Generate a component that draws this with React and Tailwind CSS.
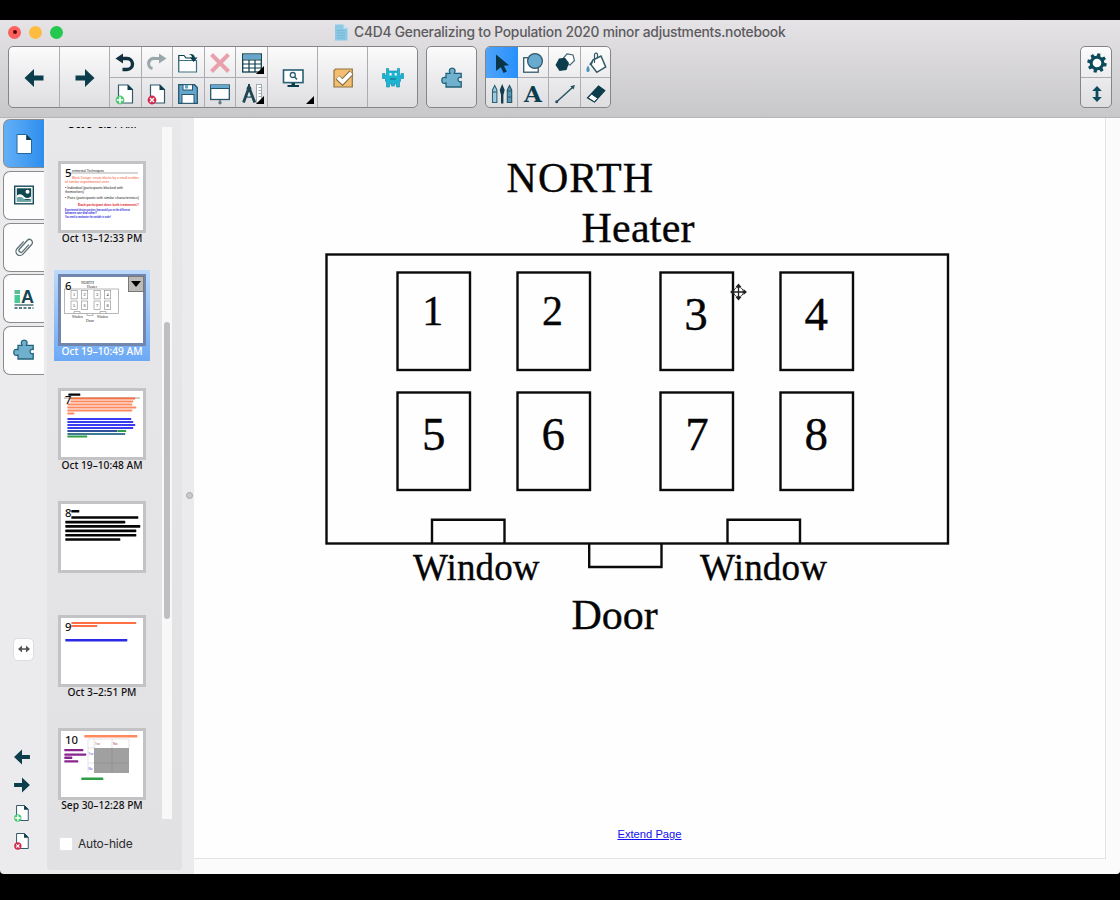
import React from "react";

const DARK = "#0b3d4c";
const BLUE = "#66a6cc";

function Svg({ size = 24, children, className = "" }) {
  return (
    <svg width={size} height={size} viewBox="0 0 24 24" fill="none" className={"shrink-0 " + className}>
      {children}
    </svg>
  );
}

const Arrow = ({ flip, size = 24 }) => (
  <Svg size={size} className={flip ? "rotate-180" : ""}>
    <path d="M2.5 12 L12 3 V9.6 H21.5 V14.4 H12 V21 Z" fill="#0b3d4c" />
  </Svg>
);
const Undo = () => (
  <Svg>
    <path d="M7 7.5 H14 A5 5 0 0 1 14 18.5 H9.5" stroke="#12303f" strokeWidth="3.4" />
    <path d="M2.5 7.5 L10 2.5 V12.5 Z" fill="#12303f" />
  </Svg>
);
const Redo = () => (
  <Svg>
    <path d="M17 7.5 H10 A5 5 0 0 0 7.5 17.5" stroke="#9aa8ac" strokeWidth="3.2" />
    <path d="M21.5 7.5 L14 2.5 V12.5 Z" fill="#9aa8ac" />
  </Svg>
);
const FolderOpen = () => (
  <Svg>
    <path d="M2.8 21 V4.5 H8 L10 7 H17" stroke={DARK} strokeWidth="1.2" fill="#fff" />
    <path d="M2.8 9.5 H20.5 V21 H2.8 Z" stroke="#3f7084" strokeWidth="1.2" fill="#fff" />
    <path d="M13 3 C17 2.5 18.5 4 18.8 6.5 H21.5 L17.6 11 L14 6.5 H16.2 C16 5 15 4 13 3Z" fill={DARK} />
  </Svg>
);
const Cross = () => (
  <Svg>
    <path d="M3.5 3.5 L20.5 20.5 M20.5 3.5 L3.5 20.5" stroke="#e8a0ac" strokeWidth="4" />
  </Svg>
);
const Table = () => (
  <Svg>
    <rect x="2.7" y="3" width="18.6" height="18" fill="#fff" stroke={DARK} strokeWidth="1.3" />
    <rect x="3.2" y="3.5" width="17.6" height="5" fill={BLUE} />
    <path d="M2.7 9 H21.3 M2.7 13 H21.3 M2.7 17 H21.3 M9 9 V21 M15 9 V21" stroke={DARK} strokeWidth="1.2" />
  </Svg>
);
const PageIcon = ({ kind, size = 24 }) => (
  <Svg size={size}>
    <path d="M5.5 3 H15 L19.5 7.5 V21 H5.5 Z" fill="#fff" stroke="#34596a" strokeWidth="1.2" />
    <path d="M14.5 2.5 L20 8 H14.5 Z" fill={DARK} />
    {kind === "add" && (
      <>
        <circle cx="7" cy="18" r="4.4" fill="#4cc873" />
        <path d="M7 14.8 V21.2 M3.8 18 H10.2" stroke="#fff" strokeWidth="1.6" />
      </>
    )}
    {kind === "del" && (
      <>
        <circle cx="7" cy="18" r="4.4" fill="#d22a4d" />
        <path d="M5 16 L9 20 M9 16 L5 20" stroke="#fff" strokeWidth="1.4" />
      </>
    )}
  </Svg>
);
const Save = () => (
  <Svg>
    <path d="M2.7 2.7 H18.5 L21.3 5.5 V21.3 H2.7 Z" fill={BLUE} stroke="#23566c" strokeWidth="1.3" />
    <rect x="7" y="2.7" width="9.5" height="5.3" fill="#fff" stroke="#23566c" />
    <rect x="9" y="3" width="3" height="3.5" fill={BLUE} />
    <rect x="6" y="12.5" width="12" height="8.8" fill="#fff" stroke="#23566c" />
  </Svg>
);
const Screen = () => (
  <Svg>
    <rect x="2.7" y="3" width="18.6" height="14.5" fill="#fff" stroke="#23566c" strokeWidth="1.3" />
    <rect x="3" y="3" width="18" height="3.3" fill={BLUE} />
    <path d="M2.7 6.5 H21.3" stroke="#23566c" />
    <path d="M12 18 V20" stroke="#647b86" strokeWidth="1.5" />
    <circle cx="12" cy="20.7" r="1.7" fill="#647b86" />
  </Svg>
);
const Compass = () => (
  <Svg>
    <path d="M9 5.5 L3.5 20.5 M9 5.5 L14.8 20.5" stroke="#1f4553" strokeWidth="2.8" />
    <path d="M5 13.5 Q9 17 13 13.5" stroke="#1f4553" strokeWidth="1.2" />
    <path d="M9 2 V5" stroke="#1f4553" strokeWidth="2" />
    <circle cx="9" cy="6.4" r="2.4" fill="#1f4553" />
    <rect x="16.5" y="2.5" width="5" height="18.5" fill="#fff" stroke="#a3adb1" />
    <path d="M18.5 5.5 H21.5 M18.5 8.5 H21.5 M18.5 11.5 H21.5 M18.5 14.5 H21.5" stroke="#a3adb1" />
  </Svg>
);
const Monitor = () => (
  <Svg>
    <rect x="2.5" y="4" width="19.5" height="12.6" fill="#fff" stroke="#2a6075" strokeWidth="1.6" />
    <circle cx="11.8" cy="9" r="2.5" stroke="#2a6075" strokeWidth="1.3" />
    <path d="M13.5 10.8 L16 13.5" stroke="#2a6075" strokeWidth="1.6" />
    <path d="M10.5 17 H14 V19 H18 V21 H6.5 V19 H10.5 Z" fill={DARK} />
  </Svg>
);
const CheckBox = () => (
  <Svg>
    <path d="M4.5 3 H21.3 V21 H3 V4.5 Z" fill="#f3be70" stroke="#8f7440" strokeWidth="1.2" />
    <path d="M6.5 11.5 L11.5 16 L20.5 6.5" stroke="#77643c" strokeWidth="5.6" />
    <path d="M6.8 11.5 L11.5 15.8 L20.3 6.8" stroke="#fff" strokeWidth="3.8" />
  </Svg>
);
const Monster = () => (
  <Svg>
    <path
      d="M5.5 2.5 H7.5 V5 H16.5 V2.5 H18.5 V9.5 H20 V7.5 H22.5 V12.5 H19.5 V15.5 H18.5 V21 H15.5 V18 H13.5 V20 H10.5 V18 H8.5 V21 H5.5 V15.5 H4.5 V12.5 H1.5 V7.5 H4 V9.5 H5.5 Z"
      fill="#1cb4d0"
      stroke="#1794b0"
      strokeWidth=".7"
    />
    <path d="M8.5 8.2 H10.5 M13.7 8.2 H15.7" stroke="#fff" strokeWidth="2.4" />
    <path d="M9 13 H15" stroke="#12667c" strokeWidth="1.2" />
  </Svg>
);
const Puzzle = ({ size = 24 }) => (
  <Svg size={size}>
    <path
      d="M6 7.3 H10 C8.2 3.8 10.2 2.2 12.2 2.2 C14.2 2.2 16.2 3.8 14.4 7.3 H21.2 V11.5 C17 10 17 17 21.2 15.6 V21 H6 V17 C2.5 18.5 1.8 16 1.8 14.3 C1.8 12.4 3 10.5 6 11.7 Z"
      fill="#6fb0ce"
      stroke="#23627a"
      strokeWidth="1.3"
    />
  </Svg>
);
const Pointer = () => (
  <Svg>
    <path d="M6 2.5 L19 13.2 L13.9 13.8 L16.8 19.6 L13.6 21 L10.8 15.3 L6 19 Z" fill="#0a3447" />
  </Svg>
);
const Shapes = () => (
  <Svg>
    <rect x="2.7" y="6.7" width="14.5" height="14.5" fill="#fff" stroke="#33596a" strokeWidth="1.3" />
    <circle cx="14" cy="10" r="7.4" fill="#68abcf" stroke="#33596a" strokeWidth="1.3" />
  </Svg>
);
const Polygons = () => (
  <Svg>
    <path d="M14 2.8 L20 4 L21.5 9.5 L17 14 L11.5 12.5 L10.5 7 Z" fill="#fff" stroke="#4b6b79" strokeWidth="1.2" />
    <path d="M6 7.5 L12 6.8 L16 12 L13.5 19 L6.5 20 L2.5 14 Z" fill={DARK} />
  </Svg>
);
const Bucket = () => (
  <Svg>
    <path d="M9 9 L17 5 L21.7 16 L12.8 21.3 L6.8 13.5 Z" fill="#fff" stroke="#33596a" strokeWidth="1.5" />
    <path d="M10.5 12 V3.3 C11 1.5 13.5 2 13.5 3.5 V7" stroke="#33596a" strokeWidth="1.2" />
    <path d="M9 8.5 L5 13.5 L8 14 Z" fill="#33596a" />
    <path d="M4 14.5 C6 17.5 6.3 21 4 21 C1.7 21 2 17.5 4 14.5" fill="#4d91b7" />
  </Svg>
);
const Pens = () => (
  <Svg>
    <path d="M2.5 20.5 V8 L4.7 3.5 L6.9 8 V20.5 Z" fill="#9ccbdc" stroke="#2d6379" strokeWidth="1.1" />
    <path d="M12.2 2 L14.7 8 L13.4 13 V21.5 H11 V13 L9.7 8 Z" fill="#123e4f" />
    <path d="M17.3 20.5 V8 L19.5 3.5 L21.7 8 V20.5 Z" fill="#5496b1" stroke="#24566a" strokeWidth="1.1" />
    <path d="M2.5 10 H6.9 M17.3 9 H21.7 M17.3 15 H21.7" stroke="#24566a" />
  </Svg>
);
const LetterA = () => <span className="font-['DejaVu_Serif',serif] text-[23px] leading-[24px] font-bold text-[#0b3d4c]">A</span>;
const Line = () => (
  <Svg>
    <path d="M4 19.5 L20 5" stroke="#24505f" strokeWidth="1.4" />
    <circle cx="3.7" cy="19.7" r="1.5" fill="#24505f" />
    <path d="M22 3 L20.5 7.5 L17.3 4.2 Z" fill="#24505f" />
  </Svg>
);
const Eraser = () => (
  <Svg>
    <path d="M14.5 4 L20.8 8.5 L10.5 20 L3.5 15.8 Z" fill={DARK} stroke={DARK} strokeWidth="1.2" />
    <path d="M7.6 12 L13.8 16.4 L10.3 19.8 L4 15.8 Z" fill="#fff" stroke={DARK} />
  </Svg>
);
const Gear = () => (
  <Svg>
    <g fill="#0b4b5c">
      {[0, 45, 90, 135, 180, 225, 270, 315].map((a) => (
        <path key={a} d="M10 6 L10.5 2.3 H13.5 L14 6 Z" transform={`rotate(${a + 12} 12 12)`} />
      ))}
    </g>
    <circle cx="12" cy="12" r="5.8" fill="#fff" stroke="#0b4b5c" strokeWidth="3" />
  </Svg>
);
const UpDown = () => (
  <Svg>
    <path d="M12 4 L16.8 9 H13.4 V15 H16.8 L12 20 L7.2 15 H10.6 V9 H7.2 Z" fill="#0b4b5c" />
  </Svg>
);
const Corner = () => <span className="absolute right-[3px] bottom-[3px] h-0 w-0 border-b-[8px] border-l-[8px] border-b-black border-l-transparent" />;

function Group({ children, className }) {
  return (
    <div className={"flex h-[62px] overflow-hidden rounded-[5px] border border-[#858488] bg-linear-to-b from-[#fbfbfc] to-[#dedde0] " + className}>
      {children}
    </div>
  );
}

function Cell({ children, className = "" }) {
  return <div className={"relative flex items-center justify-center border-[#adacb0] pt-[2px] " + className}>{children}</div>;
}

function Toolbar() {
  const small = [
    [<Undo />], [<Redo />], [<FolderOpen />], [<Cross />], [<Table />, 1],
    [<PageIcon kind="add" />], [<PageIcon kind="del" />], [<Save />], [<Screen />], [<Compass />, 1],
  ];
  const tools = [<Shapes />, <Polygons />, <Bucket />, <Pens />, <LetterA />, <Line />, <Eraser />];
  return (
    <div className="flex pr-2 pl-2">
      <Group className="w-[410px]">
        <Cell className="w-[51px] border-r"><Arrow /></Cell>
        <Cell className="w-[50px] border-r"><Arrow flip /></Cell>
        <div className="grid w-[158px] grid-cols-5 grid-rows-[31px_29px]">
          {small.map(([icon, corner], i) => (
            <Cell key={i} className={i < 5 ? "border-r border-b" : "border-r"}>
              {icon}
              {corner && <Corner />}
            </Cell>
          ))}
        </div>
        <Cell className="w-[50px] border-r"><Monitor /><Corner /></Cell>
        <Cell className="w-[50px] border-r"><CheckBox /></Cell>
        <Cell className="flex-1"><Monster /></Cell>
      </Group>
      <Group className="ml-2 w-[51px]">
        <Cell className="flex-1"><Puzzle /></Cell>
      </Group>
      <Group className="ml-2 w-[126px]">
        <div className="grid flex-1 grid-cols-[32px_31px_32px_29px] grid-rows-[31px_29px]">
          <Cell className="bg-linear-to-r from-[#4da3f8] to-[#2690fb]"><Pointer /></Cell>
          {tools.map((t, i) => (
            <Cell key={i} className={(i < 3 ? "border-b " : "") + (i === 2 || i === 6 ? "" : "border-r")}>{t}</Cell>
          ))}
        </div>
      </Group>
      <Group className="ml-auto w-[32px] flex-col">
        <Cell className="h-[31px] border-b pl-px"><Gear /></Cell>
        <Cell className="h-[29px] pl-px"><UpDown /></Cell>
      </Group>
    </div>
  );
}

function Tab({ active, children }) {
  return (
    <div
      className={
        "flex h-[49px] items-center justify-center rounded-l-[7px] border border-r-0 border-[#8b8b8d] pr-px " +
        (active ? "bg-linear-to-r from-[#62b0f6] to-[#2d8eee]" : "bg-[#fdfdfd]")
      }
    >
      {children}
    </div>
  );
}

function TabStrip() {
  return (
    <div className="flex w-[44px] flex-col">
      <div className="flex flex-col gap-[2.6px] pt-[1.4px] pl-[3px]">
        <Tab active>
          <Svg>
            <path d="M5 2.5 H14.5 L19.5 7.5 V21.5 H5 Z" fill="#fff" stroke="#24699b" />
            <path d="M14.2 2.5 L19.8 8 H14.2 Z" fill={DARK} />
          </Svg>
        </Tab>
        <Tab>
          <Svg>
            <rect x="2.7" y="3.2" width="18.6" height="17.6" fill="#fff" stroke="#174b57" strokeWidth="1.4" />
            <rect x="4.8" y="5.3" width="14.4" height="13.2" fill="#0f4851" />
            <circle cx="15.5" cy="8.8" r="2" fill="#fff" />
            <path d="M5 12.5 Q8.5 9.5 12 13.5 Q15 16.5 19 13.5 V16 H5Z" fill="#fff" />
            <path d="M5 14.5 Q9 12.5 12 16 Q15 18 19 16 V18.5 H5Z" fill="#6da8a8" />
          </Svg>
        </Tab>
        <Tab>
          <Svg>
            <g transform="rotate(42 12 12)" stroke="#5c7177" strokeWidth="1.3">
              <path d="M8 8 V18 A4 4 0 0 0 16 18 V5 A3 3 0 0 0 10 5 V16.5 A2 2 0 0 0 14 16.5 V7" />
            </g>
          </Svg>
        </Tab>
        <Tab>
          <Svg>
            <rect x="2.5" y="3" width="5.5" height="4" fill="#5bbd97" />
            <rect x="2.5" y="8" width="5.5" height="8" fill="#48ca97" />
            <text x="9" y="16" fontSize="18" fontWeight="700" fontFamily="Liberation Sans, sans-serif" fill="#164752">A</text>
            <path d="M2.5 18 H21.5" stroke="#28535c" strokeWidth="1.2" />
            <path d="M2.5 21 H21.5" stroke="#28535c" strokeWidth="1.4" strokeDasharray="3 1.5" />
          </Svg>
        </Tab>
        <Tab><Puzzle /></Tab>
      </div>
      <div className="mt-[263px] ml-[13px] flex h-[23px] w-[21px] items-center justify-center rounded-[5px] border border-[#dddddf] bg-white">
        <svg width="12" height="8" viewBox="0 0 12 8">
          <path d="M0 4 L4 .5 V3.2 H8 V.5 L12 4 L8 7.5 V4.8 H4 V7.5Z" fill="#555" />
        </svg>
      </div>
      <div className="mt-[86px] flex flex-col items-center gap-[8px] pr-[1px]">
        <Arrow size={20} />
        <Arrow size={20} flip />
        <PageIcon kind="add" size={20} />
        <PageIcon kind="del" size={20} />
      </div>
    </div>
  );
}

const bar = (x, y, w, color, h = 2) => ({ x, y, w, h, color });
const OR = "#ff8a60";
const BL = "#3a3af0";
const BK = "#050505";
const GR = "#2f9e46";
const PU = "#8a2590";

const BARS = {
  7: [
    bar(8, 3, 12, BK, 2.4), bar(10, 7, 65, "#f2713f"), bar(10, 10, 63, OR), bar(7, 13, 65, OR), bar(7, 16, 69, OR), bar(7, 19, 65, OR), bar(7, 22, 7, OR),
    bar(7, 27.5, 64, BL), bar(7, 30.5, 66, BL), bar(7, 33.5, 68, BL), bar(7, 36.5, 66, BL), bar(7, 39.5, 50, "#31539d"), bar(57, 39.5, 9, GR), bar(7, 42.5, 58, "#3f7a95"), bar(7, 45.2, 20, GR),
  ],
  8: [
    bar(11, 6.5, 8, BK, 2.6), bar(11, 12.8, 67, BK, 2.6), bar(5, 17.4, 60, BK, 2.6), bar(5, 21.7, 75, BK, 2.6),
    bar(5, 26.2, 71, BK, 2.6), bar(5, 30.5, 71, BK, 2.6), bar(5, 34.8, 55, BK, 2.6),
  ],
  9: [bar(11, 4.5, 65, "#ff7047"), bar(11, 7.6, 26, "#ff7047"), bar(5, 21.6, 62, "#2929e6", 2.4)],
  10: [
    bar(24, 4.7, 53, OR, 2.4), bar(4, 18.6, 19, PU, 2.3), bar(4, 23, 22, PU, 2.3), bar(4, 26.2, 8, PU, 2.3), bar(4, 29.8, 14, PU, 2.3), bar(21, 47, 22, GR, 2.6),
  ],
};

function T({ x, y, s, w, fill = "#222", children, serif, bold }) {
  return (
    <text x={x} y={y} fontSize={s} textLength={w} lengthAdjust="spacingAndGlyphs" fill={fill} fontWeight={bold ? 700 : 400} fontFamily={serif ? "Liberation Serif, serif" : "Liberation Sans, sans-serif"}>
      {children}
    </text>
  );
}

function Preview({ n }) {
  return (
    <svg width="82" height="66" viewBox="0 0 82 66" className="block bg-white">
      {n === 5 && (
        <>
          <T x={11} y={7.5} s={4} w={32}>erimental Techniques</T>
          <path d="M5 9 H77" stroke="#777" strokeWidth=".6" />
          <T x={11} y={14.5} s={3.6} w={67} fill="#f35a35">Block Design: create blocks by a small number</T>
          <T x={4} y={18.8} s={3.8} w={44} fill="#f35a35">of similar experimental units</T>
          <T x={4} y={25} s={4} w={58}>• Individual (participants blocked with</T>
          <T x={4} y={29} s={4} w={19}>themselves)</T>
          <T x={4} y={35} s={3.8} w={74}>• Pairs (participants with similar characteristics)</T>
          <T x={17} y={42} s={3.8} w={61} fill="#e01f30" bold>Each participant does both treatments!!</T>
          <T x={4} y={46.6} s={2.6} w={65} fill="#2424dd" bold>Experimental design question: how would you set the difference</T>
          <T x={4} y={49.6} s={2.6} w={32} fill="#2424dd" bold>between one and other?</T>
          <T x={4} y={54.3} s={2.6} w={46} fill="#2424dd" bold>You need to randomize the variable in order!</T>
        </>
      )}
      {n === 6 && (
        <g fill="none" stroke="#888" strokeWidth=".6">
          <rect x="3.5" y="12" width="54" height="24.5" />
          {[10, 20.5, 33, 43.5].map((x) => (
            <g key={x}>
              <rect x={x} y="13.5" width="6.2" height="8.4" />
              <rect x={x} y="24" width="6.2" height="8.4" />
            </g>
          ))}
          <path d="M13 36.5 V34.5 H19 V36.5 M39 36.5 V34.5 H45 V36.5 M26 36.5 V38.5 H32 V36.5" />
          <g stroke="none">
            {["1", "2", "3", "4", "5", "6", "7", "8"].map((d, i) => (
              <T key={d} x={[12, 22.5, 35, 45.5][i % 4]} y={i < 4 ? 19 : 29.5} s={4} w={2.2} serif>{d}</T>
            ))}
            <T x={20} y={6.8} s={3.8} w={13} serif>NORTH</T>
            <T x={26} y={11.2} s={3.8} w={10} serif>Heater</T>
            <T x={11} y={40.5} s={3.6} w={11} serif>Window</T>
            <T x={36} y={40.5} s={3.6} w={11} serif>Window</T>
            <T x={25} y={44.5} s={3.8} w={8} serif>Door</T>
          </g>
        </g>
      )}
      {n === 10 && (
        <>
          <path d="M27 8 H68 V17 M27 8 V41 M33 8 V17 M51 8 V17 M27 17 H34 M27 32 H34" stroke="#d5d0d8" strokeWidth=".6" fill="none" />
          <rect x="33" y="17" width="35" height="25" fill="#a0a0a0" />
          <path d="M51 17 V42 M33 32 H68" stroke="#8e8e8e" strokeWidth=".6" />
          <T x={34} y={13.5} s={3.6} w={5} fill="#a44258">True</T>
          <T x={52} y={13.5} s={3.6} w={4.5} fill="#a44258">No</T>
          <T x={27.5} y={24} s={3.6} w={5} fill="#4a4ad8">True</T>
          <T x={27.5} y={38.5} s={3.6} w={4} fill="#4a4ad8">No</T>
        </>
      )}
      {n === 7 && <path d="M3 7 H79" stroke="#777" strokeWidth=".7" />}
      {(BARS[n] || []).map((b, i) => (
        <rect key={i} x={b.x - 0.7} y={b.y - 0.6} width={b.w} height={b.h} fill={b.color} rx=".6" />
      ))}
      <text x="4" y={n === 7 ? 13 : 12.5} fontSize="11.3" fontFamily="Noto Sans, sans-serif" fontWeight="500" fill="#111">{n}</text>
    </svg>
  );
}

function Thumb({ n, label, selected }) {
  return (
    <div className={"flex h-[91px] w-[96px] flex-col items-center pt-[4px] " + (selected ? "bg-linear-to-b from-[#bcd9fa] to-[#6ca9f5]" : "")}>
      <div className={"relative border-[3px] " + (selected ? "border-[#7285ad]" : "border-[#c3c3c5]")}>
        <Preview n={n} />
        {selected && (
          <div className="absolute -top-px -right-px flex h-[16px] w-[16px] items-center justify-center border border-[#777] bg-[#bdbbb9]">
            <span className="border-x-[5px] border-t-[6px] border-x-transparent border-t-black" />
          </div>
        )}
      </div>
      <div className={"-mt-[2px] h-[15px] font-['Noto_Sans',sans-serif] text-[10.2px] leading-[14px] font-medium whitespace-nowrap " + (selected ? "text-white" : "text-[#111]")}>
        {label}
      </div>
    </div>
  );
}

const PAGES = [
  [5, "Oct 13–12:33 PM"],
  [6, "Oct 19–10:49 AM"],
  [7, "Oct 19–10:48 AM"],
  [8, ""],
  [9, "Oct 3–2:51 PM"],
  [10, "Sep 30–12:28 PM"],
];

function PagePanel() {
  return (
    <div className="mt-[2px] ml-[3px] flex h-[750px] w-[135px] flex-col rounded-[4px] bg-linear-to-b from-[#e8e7e9] to-[#e1e0e3] pt-[7px]">
      <div className="flex h-[692px]">
        <div className="flex w-[115px] flex-col overflow-hidden pl-[7px]">
          <div className="-mt-[10px] h-[14px] w-[96px] text-center font-['Noto_Sans',sans-serif] text-[10.2px] leading-[14px] font-medium">Oct 5–8:51 AM</div>
          <div className="mt-[25.5px] flex flex-col gap-[22.5px]">
            {PAGES.map(([n, label]) => (
              <Thumb key={n} n={n} label={label} selected={n === 6} />
            ))}
          </div>
        </div>
        <div className="w-[10px] bg-[#f8f8f9] pt-[195px] pl-[2px]">
          <div className="h-[297px] w-[6px] rounded-full bg-[#bfbec1]" />
        </div>
      </div>
      <div className="mt-[17px] flex items-center pl-[12px]">
        <span className="h-[14px] w-[14px] rounded-[2px] border border-[#e4e4e6] bg-white" />
        <span className="ml-[5px] font-['Inter',sans-serif] text-[12px] leading-[16px] tracking-[-0.2px] text-[#2c2c2e]">Auto-hide</span>
      </div>
    </div>
  );
}

const DESKS = [
  [397.5, 272.5, "1", 422.3, 325, 42], [517.5, 272.5, "2", 542, 325, 42], [660.5, 272.5, "3", 684.3, 329.5, 47], [780.5, 272.5, "4", 804.5, 329.5, 47],
  [397.5, 392.5, "5", 422, 450, 47], [517.5, 392.5, "6", 541.5, 450, 47], [660.5, 392.5, "7", 685.3, 450.3, 47], [780.5, 392.5, "8", 804.6, 450, 47],
];

function Classroom() {
  return (
    <svg width="912" height="560" viewBox="194 118 912 560" className="block">
      <g fill="none" stroke="#0a0a0a" strokeWidth="2.4">
        <rect x="326.5" y="254.5" width="621.5" height="289" />
        {DESKS.map(([x, y, n]) => (
          <rect key={n} x={x} y={y} width="72.5" height="97.5" />
        ))}
        <path d="M432 543.5 V519.7 H504.5 V543.5 M727.5 543.5 V519.7 H800 V543.5 M589.2 543.5 V567 H661.5 V543.5" />
      </g>
      <g fontFamily="Liberation Serif, serif" fontSize="42" fill="#050505" stroke="#050505" strokeWidth=".35">
        <text x="506.5" y="192" textLength="146.5">NORTH</text>
        <text x="581.5" y="241.7" textLength="113">Heater</text>
        {DESKS.map(([, , n, x, y, size]) => (
          <text key={n} x={x} y={y} fontSize={size}>{n}</text>
        ))}
        <text x="413" y="579.5" fontSize="37" textLength="126.5">Window</text>
        <text x="700" y="579.5" fontSize="37" textLength="127">Window</text>
        <text x="571.5" y="629">Door</text>
      </g>
      <g transform="translate(738.5 292)" stroke="#222" fill="#222">
        <circle r="4.8" fill="#fff" fillOpacity=".7" strokeWidth=".9" />
        <path d="M-7 0 H7 M0 -7 V7" strokeWidth="1.3" />
        <path d="M-8.5 0 L-5 -3 V3Z M8.5 0 L5 -3 V3Z M0 -8.5 L-3 -5 H3Z M0 8.5 L-3 5 H3Z" stroke="none" />
      </g>
    </svg>
  );
}

export default function App() {
  return (
    <div className="flex h-[900px] w-[1120px] flex-col overflow-hidden bg-black pt-[20px]">
      <div className="flex h-[854px] flex-col overflow-hidden rounded-b-[4px] bg-[#ebeaec]">
        <header className="h-[98px] border-b border-[#b5b4b7] bg-linear-to-b from-[#e5e3e6] to-[#c8c7ca]">
          <div className="flex h-[26px] items-center pb-[2px]">
            <div className="flex w-[334px] gap-[8px] pl-[8px]">
              <span className="flex h-[13px] w-[13px] items-center justify-center rounded-full bg-[#fc615d]">
                <span className="h-[4px] w-[4px] rounded-full bg-[#5c0505]" />
              </span>
              <span className="h-[13px] w-[13px] rounded-full bg-[#fdbc40]" />
              <span className="h-[13px] w-[13px] rounded-full bg-[#22c94e]" />
            </div>
            <svg width="14" height="17" viewBox="0 0 14 17">
              <path d="M1 .5 H9.5 L13.5 4.5 V16.5 H1Z" fill="#8cc9e5" />
              <path d="M9.5 .5 L13.5 4.5 H9.5Z" fill="#c9e7f4" />
              <path d="M3 6.5 H11 M3 9 H11 M3 11.5 H11 M3 14 H11" stroke="#6fb2d2" strokeWidth=".8" />
            </svg>
            <span className="ml-[6px] font-['Inter',sans-serif] text-[13.8px] leading-[20px] font-medium tracking-[-0.23px] whitespace-nowrap text-[#5c5b5d]">
              C4D4 Generalizing to Population 2020 minor adjustments.notebook
            </span>
          </div>
          <Toolbar />
        </header>
        <div className="flex flex-1">
          <TabStrip />
          <PagePanel />
          <div className="flex w-[12px] justify-center pt-[374px]">
            <span className="ml-[3px] h-[7px] w-[7px] rounded-full border border-[#aaa] bg-[#c9c8ca]" />
          </div>
          <main className="flex flex-1 flex-col bg-[#fbfbfb]">
            <div className="flex h-[741px] w-[912px] flex-col border-r border-b border-[#e3e3e3] bg-[#fefefe]">
              <Classroom />
              <a className="mt-[148px] self-center font-['Liberation_Sans',sans-serif] text-[11.2px] leading-[16px] text-[#1010f0] underline">Extend Page</a>
            </div>
          </main>
        </div>
      </div>
    </div>
  );
}
